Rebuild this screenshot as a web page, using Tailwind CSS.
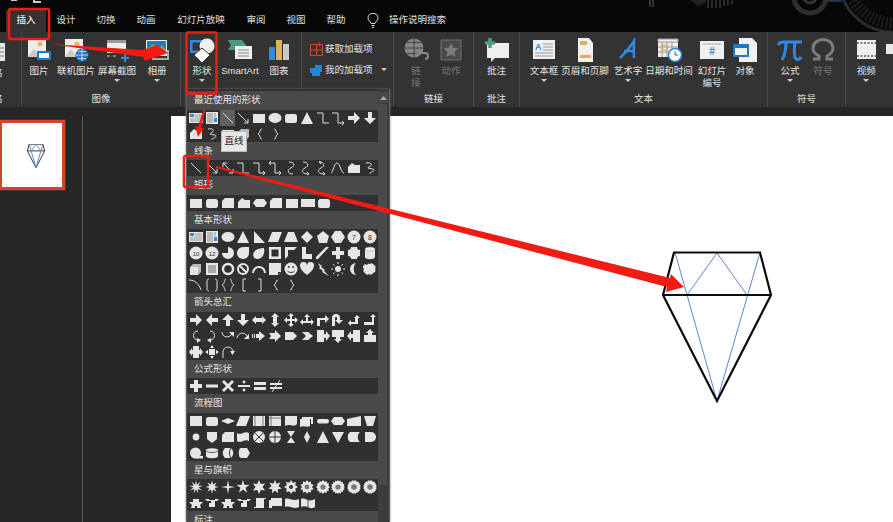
<!DOCTYPE html>
<html lang="zh-CN">
<head>
    <meta charset="UTF-8">
    <title>插入形状</title>
    <script src="https://cdn.jsdelivr.net/npm/@tailwindcss/browser@4"></script>
</head>
<body class="bg-[#262626]">
<div class="relative w-[893px] h-[522px] overflow-hidden flex flex-col bg-[#262626] text-[9.5px] text-[#e4e4e4] font-['Liberation_Sans','Noto_Sans_CJK_SC',sans-serif]">

    <!-- title bar + tabs -->
    <div class="relative h-[32px] shrink-0 bg-[#070707] flex items-end pl-[6px] text-[#e0e0e0]">
        <svg class="absolute left-0 top-0" width="893" height="32" fill="none">
            <path d="M11 0h6M34 0v2h7" stroke="#ccc" stroke-width="2"/>
            <path d="M650 0v7M653 0v7" stroke="#333" stroke-width="2"/>
            <path d="M690 0l8 6 8-3V0z" fill="#222"/>
            <path d="M708 0v8M712 0v8M716 0v8M720 0v8M724 0v6M728 0v5M732 0v4" stroke="#2b2b2b" stroke-width="2"/>
            <circle cx="810" cy="-3" r="16" stroke="#2e2e2e" stroke-width="5"/>
            <circle cx="810" cy="-3" r="6" stroke="#333" stroke-width="3"/>
            <circle cx="893" cy="-22" r="54" stroke="#2b2b2b" stroke-width="3"/>
            <circle cx="893" cy="-22" r="45" stroke="#1c1c1c" stroke-width="12" stroke-dasharray="2 2"/>
            <path d="M826 1h16" stroke="#1d3347" stroke-width="2"/>
        </svg>
        <div class="relative w-[40px] h-[22px] pb-[2px] bg-[#333] flex items-center justify-center text-white">插入</div>
        <div class="relative w-[40px] h-[22px] pb-[2px] flex items-center justify-center">设计</div>
        <div class="relative w-[40px] h-[22px] pb-[2px] flex items-center justify-center">切换</div>
        <div class="relative w-[40px] h-[22px] pb-[2px] flex items-center justify-center">动画</div>
        <div class="relative w-[70px] h-[22px] pb-[2px] flex items-center justify-center">幻灯片放映</div>
        <div class="relative w-[40px] h-[22px] pb-[2px] flex items-center justify-center">审阅</div>
        <div class="relative w-[40px] h-[22px] pb-[2px] flex items-center justify-center">视图</div>
        <div class="relative w-[40px] h-[22px] pb-[2px] flex items-center justify-center">帮助</div>
        <div class="relative w-[33px] h-[22px] pb-[2px] flex items-center justify-center">
            <svg width="12" height="15" viewBox="0 0 12 15" fill="none" stroke="#ddd"><path d="M4 10.5C3.5 8.5 1 7.500 1 4.800A5 4.500 0 0 1 11 4.800C11 7.500 8.500 8.500 8 10.500zM4.500 12.500h3M5 14.300h2"/></svg>
        </div>
        <div class="relative h-[22px] pb-[2px] flex items-center whitespace-nowrap">操作说明搜索</div>
    </div>

    <!-- ribbon -->
    <div class="h-[75px] shrink-0 bg-[#333] flex">
        <!-- cut off group on the left -->
        <div class="w-[22px] flex flex-col border-r border-[#484848] overflow-hidden">
            <div class="h-[58px] pt-[8px]">
                <svg width="6" height="24"><path d="M0 3h5v18H0z" fill="#e8e8e8"/><path d="M0 8h4M0 12h4M0 16h4" stroke="#777"/></svg>
                <div class="-ml-[7px] mt-[2px]">格</div>
            </div>
            <div class="-ml-[7px] leading-[17px]">格</div>
        </div>

        <!-- 图像 -->
        <div class="w-[159px] flex flex-col border-r border-[#484848]">
            <div class="h-[58px] pt-[5px] flex">
                <div class="w-[34px] flex flex-col items-center">
                    <svg width="26" height="26" viewBox="0 0 26 26"><path d="M2 2h18v18H2z" fill="#f0eeea"/><circle cx="14" cy="7" r="2.500" fill="#e5b562"/><path d="M2 20l6-8 6 8z" fill="#cfc9bf"/><path d="M11 14h14v9H11z" fill="#1f78c4"/><path d="M13 16h10v5H13z" fill="#f4f4f4"/></svg>
                    <div class="leading-[12px] mt-[2px] whitespace-nowrap">图片</div>
                </div>
                <div class="w-[40px] flex flex-col items-center">
                    <svg width="26" height="26" viewBox="0 0 26 26"><path d="M2 2h18v18H2z" fill="#f0eeea"/><circle cx="14" cy="7" r="2.500" fill="#e5b562"/><path d="M2 20l6-8 6 8z" fill="#cfc9bf"/><circle cx="19" cy="18" r="6.500" fill="#1f78c4"/><path d="M13 18h12M19 12v12M15 14.500h8M15 21.500h8" stroke="#eee" stroke-width=".8"/></svg>
                    <div class="leading-[12px] mt-[2px] whitespace-nowrap">联机图片</div>
                </div>
                <div class="w-[42px] flex flex-col items-center">
                    <svg width="26" height="26" viewBox="0 0 26 26"><path d="M3 3h19v13H3z" fill="#eee"/><path d="M3 3h19v3H3z" fill="#999"/><path d="M3 19h3M9 19h3" stroke="#999" stroke-width="1.500"/><path d="M17 21h8M21 17v8" stroke="#2f8ae0" stroke-width="2"/></svg>
                    <div class="leading-[12px] mt-[2px] whitespace-nowrap">屏幕截图</div>
                    <svg class="mt-[2px]" width="6" height="4"><path d="M0 0h6L3 3z" fill="#ccc"/></svg>
                </div>
                <div class="w-[38px] flex flex-col items-center">
                    <svg width="26" height="26" viewBox="0 0 26 26"><path d="M2 3h21v16H2z" fill="#efefef"/><path d="M3 4h19v8H3z" fill="#2979b8"/><path d="M3 12l6-5 5 4 4-3 4 4v3H3z" fill="#6aa36a"/><path d="M8 22h16v-9" fill="none" stroke="#aaa" stroke-width="2"/></svg>
                    <div class="leading-[12px] mt-[2px] whitespace-nowrap">相册</div>
                    <svg class="mt-[2px]" width="6" height="4"><path d="M0 0h6L3 3z" fill="#ccc"/></svg>
                </div>
            </div>
            <div class="text-center leading-[17px]">图像</div>
        </div>

        <!-- 插图 -->
        <div class="w-[121px] pl-[4px] flex border-r border-[#484848] h-[75px]">
            <div class="h-[58px] pt-[5px] flex">
                <div class="w-[34px] flex flex-col items-center">
                    <svg width="26" height="26" viewBox="0 0 26 26"><path d="M1 3h15v13H1z" fill="#2f8ae0"/><path d="M3.500 5.500h10v8h-10z" fill="#333"/><circle cx="18" cy="9" r="7.500" fill="#efefef"/><path d="M13 11l8 7-8 8-8-8z" fill="#fff" stroke="#333"/></svg>
                    <div class="leading-[12px] mt-[2px] whitespace-nowrap">形状</div>
                    <svg class="mt-[2px]" width="6" height="4"><path d="M0 0h6L3 3z" fill="#ccc"/></svg>
                </div>
                <div class="w-[42px] flex flex-col items-center">
                    <svg width="26" height="26" viewBox="0 0 26 26"><path d="M1 3h14l4 5-4 5H1l3-5z" fill="#4a9a86"/><path d="M8 9h17v13H8z" fill="#efefef"/><path d="M11 13h11M11 16h11M11 19h11" stroke="#888"/></svg>
                    <div class="leading-[12px] mt-[2px] whitespace-nowrap">SmartArt</div>
                </div>
                <div class="w-[36px] flex flex-col items-center">
                    <svg width="26" height="26" viewBox="0 0 26 26"><path d="M3 10h6v13H3z" fill="#2f8ae0"/><path d="M10 3h6v20h-6z" fill="#d8b35a"/><path d="M17 7h6v16h-6z" fill="#c8c8c8"/></svg>
                    <div class="leading-[12px] mt-[2px] whitespace-nowrap">图表</div>
                </div>
            </div>
        </div>

        <!-- 加载项 -->
        <div class="w-[92px] pl-[8px] pt-[10px] flex flex-col gap-[7px] border-r border-[#484848] h-[75px]">
            <div class="flex items-center gap-[1px] whitespace-nowrap">
                <svg width="14" height="14" viewBox="0 0 14 14" fill="none" stroke="#d04a33"><path d="M.5 2.500h12v11H.5zM.5 8h12M6.500 2.500v11M9 0v5M7 2.500h5"/></svg>
                <span>获取加载项</span>
            </div>
            <div class="flex items-center gap-[2px] whitespace-nowrap">
                <svg width="13" height="13" viewBox="0 0 13 13" fill="#1f86e0"><path d="M5 1h7v7h-2v4H2V9H0V4h5z"/></svg>
                <span>我的加载项</span>
                <svg class="ml-[6px]" width="6" height="4"><path d="M0 0h6L3 3z" fill="#ccc"/></svg>
            </div>
        </div>

        <!-- 链接 -->
        <div class="w-[80px] flex flex-col border-r border-[#484848]">
            <div class="h-[58px] pt-[5px] pl-[5px] flex text-[#777]">
                <div class="w-[34px] flex flex-col items-center">
                    <svg width="26" height="26" viewBox="0 0 26 26"><circle cx="11" cy="11" r="9.500" fill="#858585"/><path d="M1.500 11h19M11 1.500v19M3.500 5.500h15M3.500 16.500h15" stroke="#333" stroke-width=".8"/><path d="M14 20a3 3 0 0 1 3-4h5a3 3 0 0 1 0 6" fill="none" stroke="#888" stroke-width="2"/></svg>
                    <div class="leading-[12px] mt-[2px] w-[10px] text-center">链接</div>
                </div>
                <div class="w-[36px] flex flex-col items-center">
                    <svg width="26" height="26" viewBox="0 0 26 26"><path d="M3 3h20v20H3z" fill="#4a4a4a" stroke="#707070"/><path d="M13 6l2.200 4.800 5.200.6-3.900 3.500 1.100 5.100-4.600-2.600-4.600 2.600 1.100-5.100-3.900-3.500 5.200-.6z" fill="#7c7c7c"/></svg>
                    <div class="leading-[12px] mt-[2px] whitespace-nowrap">动作</div>
                </div>
            </div>
            <div class="text-center leading-[17px]">链接</div>
        </div>

        <!-- 批注 -->
        <div class="w-[46px] flex flex-col border-r border-[#484848]">
            <div class="h-[58px] pt-[5px] flex flex-col items-center">
                <svg width="26" height="26" viewBox="0 0 26 26"><path d="M3 6h22v15H11l-4 4v-4H3z" fill="#efefef"/><path d="M6 1v10M1 6h10" stroke="#4f9c80" stroke-width="3.500"/></svg>
                <div class="leading-[12px] mt-[2px]">批注</div>
            </div>
            <div class="text-center leading-[17px]">批注</div>
        </div>

        <!-- 文本 -->
        <div class="w-[248px] flex flex-col border-r border-[#484848]">
            <div class="h-[58px] pt-[5px] pl-[4px] flex">
                <div class="w-[40px] flex flex-col items-center">
                    <svg width="26" height="26" viewBox="0 0 26 26"><path d="M2 3h22v19H2z" fill="#f0f0f0"/><text x="4" y="13" font-size="9" font-weight="700" fill="#2f8ae0">A</text><path d="M12 7h10M12 10h10M12 13h10M4 16h18M4 19h18" stroke="#999"/></svg>
                    <div class="leading-[12px] mt-[2px] whitespace-nowrap">文本框</div>
                    <svg class="mt-[2px]" width="6" height="4"><path d="M0 0h6L3 3z" fill="#ccc"/></svg>
                </div>
                <div class="w-[42px] flex flex-col items-center">
                    <svg width="26" height="26" viewBox="0 0 26 26"><path d="M6 1h11l4 5v19H6z" fill="#f0f0f0"/><path d="M8 4h7v4H8zM8 18h11v3H8z" fill="#e0ae55"/></svg>
                    <div class="leading-[12px] mt-[2px] whitespace-nowrap">页眉和页脚</div>
                </div>
                <div class="w-[44px] flex flex-col items-center">
                    <svg width="26" height="26" viewBox="0 0 26 26" fill="none" stroke="#2f8ae0" stroke-width="2.500"><path d="M5 21C11 15 16 9 19 4c0 6-.5 11 0 17M9 14h11"/></svg>
                    <div class="leading-[12px] mt-[2px] whitespace-nowrap">艺术字</div>
                    <svg class="mt-[2px]" width="6" height="4"><path d="M0 0h6L3 3z" fill="#ccc"/></svg>
                </div>
                <div class="w-[38px] flex flex-col items-center">
                    <svg width="26" height="26" viewBox="0 0 26 26"><path d="M2 2h20v18H2z" fill="#efefef"/><path d="M2 2h20v3H2zM6 5v15M11 5v15M16 5v15M2 10h20M2 15h20" stroke="#999" fill="none"/><path d="M6 8h5v5H6z" fill="none" stroke="#e09a4a"/><circle cx="19" cy="18" r="6.500" fill="#fff" stroke="#2f8ae0" stroke-width="1.500"/><path d="M19 14.500V18h3" stroke="#555" fill="none"/></svg>
                    <div class="leading-[12px] mt-[2px] whitespace-nowrap">日期和时间</div>
                </div>
                <div class="w-[48px] flex flex-col items-center">
                    <svg width="26" height="26" viewBox="0 0 26 26"><path d="M1 4h24v18H1z" fill="#efefef"/><path d="M4 7h18" stroke="#aaa"/><text x="13" y="18" text-anchor="middle" font-size="10" font-weight="700" fill="#2f8ae0">#</text></svg>
                    <div class="leading-[12px] mt-[2px] whitespace-nowrap text-center">幻灯片<br>编号</div>
                </div>
                <div class="w-[18px] flex flex-col items-center">
                    <svg class="shrink-0" width="26" height="26" viewBox="0 0 26 26"><path d="M7 1h13l5 5v19H7z" fill="#f0f0f0"/><path d="M2 8h14v11H2z" fill="#f0f0f0" stroke="#1f78c4" stroke-width="2"/><path d="M2 8h14v3H2z" fill="#1f78c4"/></svg>
                    <div class="leading-[12px] mt-[2px] whitespace-nowrap">对象</div>
                </div>
            </div>
            <div class="text-center leading-[17px]">文本</div>
        </div>

        <!-- 符号 -->
        <div class="w-[78px] flex flex-col border-r border-[#484848]">
            <div class="h-[58px] pt-[5px] pl-[5px] flex">
                <div class="w-[34px] flex flex-col items-center">
                    <svg width="26" height="26" viewBox="0 0 26 26" fill="none" stroke="#2f8ae0" stroke-width="3"><path d="M1 8c2-3 3-3 6-3h18M9 5c0 8-1 13-4 18M18 5c-1 8-1 15 1 17 2 1 4 0 5-2"/></svg>
                    <div class="leading-[12px] mt-[2px]">公式</div>
                    <svg class="mt-[2px]" width="6" height="4"><path d="M0 0h6L3 3z" fill="#ccc"/></svg>
                </div>
                <div class="w-[32px] flex flex-col items-center text-[#777]">
                    <svg width="26" height="26" viewBox="0 0 26 26" fill="none" stroke="#7c7c7c" stroke-width="3"><path d="M3 22h6v-3C5 17 3 14 3 11a10 8.500 0 0 1 20 0c0 3-2 6-6 8v3h6"/></svg>
                    <div class="leading-[12px] mt-[2px]">符号</div>
                </div>
            </div>
            <div class="text-center leading-[17px]">符号</div>
        </div>

        <!-- 媒体 -->
        <div class="flex-1 flex flex-col overflow-hidden">
            <div class="h-[58px] pt-[5px] pl-[6px] flex">
                <div class="w-[34px] flex flex-col items-center">
                    <svg width="26" height="26" viewBox="0 0 26 26"><path d="M4 3h19v19H4z" fill="#efefef"/><path d="M4 6h19M4 19h19" stroke="#555" stroke-width="1.500" stroke-dasharray="2 1.500"/></svg>
                    <div class="leading-[12px] mt-[2px]">视频</div>
                    <svg class="mt-[2px]" width="6" height="4"><path d="M0 0h6L3 3z" fill="#ccc"/></svg>
                </div>
                <svg class="ml-[6px] mt-[7px]" width="8" height="10"><path d="M0 0h8v10H0z" fill="#e8e8e8"/></svg>
            </div>
        </div>
    </div>

    <div class="h-[9px] shrink-0 bg-[#262626]"></div>

    <!-- thumbnails + slide -->
    <div class="flex-1 flex min-h-0">
        <div class="w-[83px] shrink-0 border-r border-[#5a5a5a] pt-[4px]">
            <div class="w-[66px] h-[70px] -ml-[1px] border-[3px] border-[#d24726] bg-white pl-[25px] pt-[21px] shadow-[0_0_0_1px_#3a3a3a]">
                <svg width="18" height="24" viewBox="0 0 108 150" fill="none">
                    <path d="M11 1H97L108 43 54 149 0 43zM0 43H108" stroke="#333" stroke-width="6"/>
                    <path d="M12 1 54 148 97 1M25 43 54 1 84 43" stroke="#5f87cf" stroke-width="6"/>
                </svg>
            </div>
        </div>
        <div class="w-[88px] shrink-0"></div>
        <div class="relative flex-1 bg-white">
            <!-- diamond drawn on the slide -->
            <svg class="absolute left-[491px] top-[135px]" width="110" height="152" viewBox="0 0 110 152" fill="none">
                <path d="M13 1.500 55 150 98 1.500M25 44 55 2 85 44" stroke="#5f87cf" stroke-width="1"/>
                <path d="M12 1.500H98L109 44 55 150 1 44zM1 44H109" stroke="#0c0c0c" stroke-width="2.200" stroke-linejoin="miter"/>
            </svg>
        </div>
    </div>

    <!-- 形状 dropdown -->
    <div class="absolute left-[186px] top-[89px] bottom-0 w-[204px] bg-[#303030] border-l border-r border-[#5c5c5c] flex shadow-[0_0_2px_#777]">
        <div id="gallery" class="w-[191px] shrink-0 mt-[2px]"></div>
        <div class="flex-1 bg-[#3c3c3c] relative">
            <div class="h-[11px] mt-[3px] bg-[#474747] flex items-center justify-center">
                <svg width="7" height="4"><path d="M0 4L3.500 0 7 4z" fill="#aaa"/></svg>
            </div>
            <div class="absolute left-0 right-[2px] top-[15px] h-[381px] bg-[#4a4a4a]"></div>
        </div>
    </div>

    <!-- tooltip -->
    <div class="absolute left-[221px] top-[131px] w-[26px] h-[21px] bg-[#e8e8e8] border border-[#bdbdbd] text-[#222] flex items-center justify-center">直线</div>

    <!-- red annotations -->
    <svg class="absolute inset-0" width="893" height="522" fill="none">
        <rect x="9" y="9" width="40" height="30" rx="1.500" stroke="#f01c14" stroke-width="2.500"/>
        <rect x="186.500" y="32.500" width="30" height="61" rx="1.500" stroke="#f01c14" stroke-width="2.500"/>
        <rect x="184" y="156" width="24" height="31" rx="1.500" stroke="#f01c14" stroke-width="2.500"/>
        <path d="M50 44 143 50 157 45 168 53 145 61 143 57z" fill="#f01c14"/>
        <path d="M203 110 205 110 201 128 204 128 198 137 195 126 198 127z" fill="#f01c14"/>
        <path d="M216 166 670 278 671 274 684 287 666 292 667 287 216 168z" fill="#f01c14"/>
    </svg>
</div>

<script>
    // little polygon stars for the 星与旗帜 rows
    function star(n, r1, r2) {
        let pts = [];
        for (let i = 0; i < n * 2; i++) {
            const r = i % 2 ? r2 : r1;
            const a = Math.PI * i / n - Math.PI / 2;
            pts.push((7 + r * Math.cos(a)).toFixed(1) + ',' + (7 + r * Math.sin(a)).toFixed(1));
        }
        return `<polygon points="${pts.join(' ')}" fill="#e6e6e6"/>`;
    }
    const f = d => `<path d="${d}" fill="#e6e6e6"/>`;
    const l = d => `<path d="${d}" fill="none" stroke="#dcdcdc" stroke-width="1"/>`;
    const hole = d => `<path d="${d}" fill="#333"/>`;

    const S = {
        tb: f('M0 2h14v10H0z') + `<path d="M1 3h4v3H1z" fill="#2f8ae0"/>` + `<path d="M6 4h7M6 6h7M1 8h12M1 10h12" stroke="#888" stroke-width=".8"/>`,
        vtb: f('M1 1h12v12H1z') + `<path d="M3 2v10M5 2v10M7 2v10M10 2v4" stroke="#777" stroke-width=".8"/><path d="M9 7h3v4H9z" fill="#2f8ae0"/>`,
        line: l('M2 2 12 12'),
        arrowline: l('M2 2 12 12M12 8v4H8'),
        dbl: l('M2 2 12 12M12 8v4H8M2 6V2h4'),
        rect: f('M1 3h12v9H1z'),
        sq: f('M1 2h12v10H1z'),
        wide: f('M0 3h14v8H0z'),
        round: `<rect x="1" y="3" width="12" height="9" rx="2.500" fill="#e6e6e6"/>`,
        ellipse: `<ellipse cx="7" cy="7" rx="6.500" ry="5" fill="#e6e6e6"/>`,
        tri: f('M7 1 13 13H1z'),
        rtri: f('M2 1 13 13H2z'),
        elbow: l('M1 2h6v10h6'),
        elbowA: l('M1 2h6v10h6M11 10l2 2-2 2'),
        elbowD: l('M1 2h6v10h6M11 10l2 2-2 2M3 0 1 2l2 2'),
        curve: l('M5 1c6 0 6 4 2 6s-4 6 2 6'),
        curveA: l('M3 1c6 0 6 4 2 6s-4 6 4 6M7 11l2 2-2 1'),
        curveD: l('M3 1c6 0 6 4 2 6s-4 6 4 6M7 11l2 2-2 1M5 0 3 1l2 2'),
        wave: l('M0 12C2 12 3 2 6 2s4 10 7 10'),
        free: f('M1 12V6l4-4 3 2h5v8z'),
        scrib: l('M3 2c6-1 7 2 3 4s5 1 5 3-5 2-4 4'),
        right: f('M1 5h6V1l6 6-6 6V9H1z'),
        left: f('M13 5H7V1L1 7l6 6V9h6z'),
        up: f('M5 13V7H1l6-6 6 6H9v6z'),
        down: f('M5 1v6H1l6 6 6-6H9V1z'),
        lr: f('M0 7l4-4v2h6V3l4 4-4 4V9H4v2z'),
        ud: f('M7 0l4 4H9v6h2l-4 4-4-4h2V4H3z'),
        quad: f('M7 0l3 3H8v3h3V4l3 3-3 3V8H8v3h2l-3 3-3-3h2V8H3v2L0 7l3-3v2h3V3H4z'),
        lru: f('M7 1l3 3H8v4h3V6l3 3-3 3v-2H3v2L0 9l3-3v2h3V4H4z'),
        bent: f('M1 13V5h8V2l4 4-4 4V7H4v6z'),
        uturn: f('M1 13V5a4 4 0 0 1 8 0v2h3l-4 4-4-4h2V5a1 1 0 0 0-2 0v8z'),
        lup: f('M10 2l3 3h-2v6H4v2l-3-3 3-3v2h4V5H7z'),
        bup: f('M1 9h8V4H7l3-3 3 3h-2v8H1z'),
        cr: l('M9 2C3 2 3 11 9 11') + f('M8 9l4 2-4 3z'),
        cl: l('M5 2c6 0 6 9 0 9') + f('M6 9l-4 2 4 3z'),
        cu: l('M1 3c0 6 8 6 10 2') + f('M8 3h5v5z'),
        cd: l('M1 9c1-6 8-6 10-2') + f('M8 10h5V5z'),
        striped: f('M0 5h1v4H0zM2 5h1v4H2zM4 5h3V2l6 5-6 5V9H4z'),
        notched: f('M1 4h6V1l6 6-6 6v-3H1l2-3z'),
        home: f('M1 3h8l4 4-4 4H1z'),
        chev: f('M2 3h6l5 4-5 4H2l4-4z'),
        rc: f('M1 1h7v12H1zM8 5h2V2l4 5-4 5V9H8z'),
        dc: f('M1 1h12v7H9v2h2l-4 4-4-4h2V8H1z'),
        lc: f('M6 1h7v12H6zM6 5H4V2L0 7l4 5V9h2z'),
        uc: f('M1 6h12v7H1zM5 6V4H3l4-4 4 4H9v2z'),
        lrc: f('M4 1h6v12H4zM4 5H3V3L0 7l3 4V9h1zM10 5h1V3l3 4-3 4V9h-1z'),
        qc: f('M4 4h6v6H4zM7 0l2 3H5zM7 14l2-3H5zM0 7l3-2v4zM14 7l-3-2v4z'),
        circ: l('M2 13V7a5 5 0 0 1 10 0') + f('M9 6h5l-2.500 4z'),
        diamond: f('M7 1l6 6-6 6-6-6z'),
        flat: f('M7 4l7 3-7 3-7-3z'),
        para: f('M4 2h10l-4 10H0z'),
        trap: f('M4 2h6l4 10H0z'),
        pent: f('M7 1l6 5-2 7H3L1 6z'),
        hex: f('M4 1h6l4 6-4 6H4L0 7z'),
        n7: `<circle cx="7" cy="7" r="6.500" fill="#e6e6e6"/><text x="7" y="10" text-anchor="middle" font-size="7" fill="#333">7</text>`,
        n8: `<circle cx="7" cy="7" r="6.500" fill="#e6e6e6"/><text x="7" y="10" text-anchor="middle" font-size="7" fill="#333">8</text>`,
        n10: `<circle cx="7" cy="7" r="6.500" fill="#e6e6e6"/><text x="7" y="9.500" text-anchor="middle" font-size="6" fill="#333">10</text>`,
        n12: `<circle cx="7" cy="7" r="6.500" fill="#e6e6e6"/><text x="7" y="9.500" text-anchor="middle" font-size="6" fill="#333">12</text>`,
        pie: f('M7 1a6 6 0 1 1-6 6h6z'),
        tear: f('M13 1v6a6 6 0 1 1-6-6z'),
        chord: f('M12 2c1 6-1 11-7 11C2 13 0 9 2 6c2-3 6-4 10-4z'),
        frame: f('M1 1h12v12H1zM3.500 3.500v7h7v-7z').replace('/>', ' fill-rule="evenodd"/>'),
        half: f('M1 1h12l-3 3H4v6l-3 3z'),
        lsh: f('M2 1h4v7h6v5H2z'),
        stripe: f('M10 1h3L2 13H0v-2z'),
        cross: f('M5 1h4v4h4v4H9v4H5V9H1V5h4z'),
        plaque: f('M4 1h6c0 2 1 3 3 3v6c-2 0-3 1-3 3H4c0-2-1-3-3-3V4c2 0 3-1 3-3z'),
        can: `<path d="M2 3v8c0 3 10 3 10 0V3z" fill="#e6e6e6"/><ellipse cx="7" cy="3" rx="5" ry="2" fill="#f6f6f6" stroke="#888" stroke-width=".5"/>`,
        cube: f('M1 5h8v8H1z') + `<path d="M1 5l3-3h8L9 5zM9 5l3-3v8l-3 3z" fill="#bbb"/>`,
        bevel: f('M1 1h12v12H1z') + `<path d="M3 3h8v8H3z" fill="#aaa"/>`,
        donut: `<circle cx="7" cy="7" r="5" fill="none" stroke="#e6e6e6" stroke-width="2.400"/>`,
        no: `<circle cx="7" cy="7" r="5" fill="none" stroke="#e6e6e6" stroke-width="2"/><path d="M3.500 3.500l7 7" stroke="#e6e6e6" stroke-width="2"/>`,
        arch: `<path d="M1 11a6 6 0 0 1 12 0" fill="none" stroke="#e6e6e6" stroke-width="2"/>`,
        fold: f('M1 1h12v9l-3 3H1z') + hole('M10 13v-3h3z'),
        smile: `<circle cx="7" cy="7" r="6.500" fill="#e6e6e6"/><circle cx="4.800" cy="5" r=".9" fill="#333"/><circle cx="9.200" cy="5" r=".9" fill="#333"/><path d="M3.500 9c2 2 5 2 7 0" stroke="#333" fill="none"/>`,
        heart: f('M7 13C3 10 0 7 0 4a3.500 3.500 0 0 1 7-1 3.500 3.500 0 0 1 7 1c0 3-3 6-7 9z'),
        bolt: f('M2 1l4 3-1 1 4 3-1 1 5 5-7-4 1-1-4-3 1-1z'),
        sun: `<circle cx="7" cy="7" r="3" fill="#e6e6e6"/><path d="M7 0v2M7 12v2M0 7h2M12 7h2M2 2l1.500 1.500M10.500 10.500 12 12M2 12l1.500-1.500M10.500 3.500 12 2" stroke="#e6e6e6"/>`,
        moon: f('M9 1a6 6 0 1 0 0 12C6 11 6 3 9 1z'),
        cloud: f('M4 3a2 2 0 0 1 3-1 2.500 2.500 0 0 1 4 1 2.500 2.500 0 0 1 1 4 2.500 2.500 0 0 1-2 4 2.500 2.500 0 0 1-4 1 2.500 2.500 0 0 1-4-1 2.500 2.500 0 0 1-1-4 2.500 2.500 0 0 1 3-4z'),
        arc: l('M0 2c6 0 10 4 12 10'),
        dbr: l('M4 1C2 1 2 2 2 4v6c0 2 0 3 2 3M10 1c2 0 2 1 2 3v6c0 2 0 3-2 3'),
        dbc: l('M5 1C3 1 4 6 1 7c3 1 2 6 4 6M9 1c2 0 1 5 4 6-3 1-2 6-4 6'),
        lbr: l('M9 1H6v12h3'),
        rbr: l('M5 1h3v12H5'),
        lbc: l('M9 2C6 2 8 6 5 7c3 1 1 5 4 5'),
        rbc: l('M5 2c3 0 1 4 4 5-3 1-1 5-4 5'),
        plus: f('M5 1h4v4h4v4H9v4H5V9H1V5h4z'),
        minus: f('M1 5.500h12v3H1z'),
        times: f('M3 1l4 4 4-4 2 2-4 4 4 4-2 2-4-4-4 4-2-2 4-4-4-4z'),
        div: f('M1 6h12v2H1z') + `<circle cx="7" cy="3" r="1.400" fill="#e6e6e6"/><circle cx="7" cy="11" r="1.400" fill="#e6e6e6"/>`,
        eq: f('M1 3h12v3H1zM1 8h12v3H1z'),
        ne: f('M1 4h12v2H1zM1 8h12v2H1z') + l('M3 13 11 1'),
        pre: f('M1 2h12v10H1z') + `<path d="M3 2v10M11 2v10" stroke="#777"/>`,
        intern: f('M1 2h12v10H1z') + `<path d="M1 4h12M3 2v10" stroke="#777"/>`,
        doc: f('M1 2h12v8c-3 4-8-1-12 2z'),
        multi: f('M0 5h10v7c-3 2-6-1-10 1zM2 3h11v7h-2V5H2z'),
        term: `<rect x="1" y="5" width="12" height="4.500" rx="2.200" fill="#e6e6e6"/>`,
        prep: f('M3 3h8l3 4-3 4H3L0 7z'),
        manual: f('M0 5l14-3v10H0z'),
        mop: f('M1 2h12l-3 10H4z'),
        dot: `<circle cx="7" cy="7" r="3.400" fill="#e6e6e6"/>`,
        off: f('M2 2h10v7l-5 4-5-4z'),
        card: f('M4 2h9v10H1V5z'),
        tape: f('M1 3c4 3 8-3 12 0v8c-4-3-8 3-12 0z'),
        sum: `<circle cx="7" cy="7" r="6" fill="#e6e6e6"/><path d="M3 3l8 8M11 3l-8 8" stroke="#333"/>`,
        or: `<circle cx="7" cy="7" r="6" fill="#e6e6e6"/><path d="M7 1v12M1 7h12" stroke="#333"/>`,
        coll: f('M3 1h8L7 7l4 6H3l4-6z'),
        sort: f('M7 1l3 6-3 6-3-6z'),
        merge: f('M1 2h12L7 13z'),
        store: f('M3 2h10c-3 2-3 8 0 10H3C0 10 0 4 3 2z'),
        delay: f('M2 2h6a5 5 0 0 1 0 10H2z'),
        seq: `<circle cx="6.500" cy="7" r="5.500" fill="#e6e6e6"/>` + f('M7 10h7v2.500H7z'),
        mag: `<path d="M1 4v6c0 3 12 3 12 0V4z" fill="#e6e6e6"/><path d="M1 4c0 3 12 3 12 0" stroke="#333" fill="none"/><ellipse cx="7" cy="4" rx="6" ry="1.800" fill="#e6e6e6"/>`,
        direct: f('M4 2h6c3 3 3 7 0 10H4C1 9 1 5 4 2z') + `<path d="M10 2c-2 3-2 7 0 10" stroke="#333" fill="none"/>`,
        disp: f('M4 2h6l3 5-3 5H4C1 12 1 2 4 2z'),
        exp1: star(9, 7, 2.500),
        exp2: star(8, 6.500, 2.800),
        s4: star(4, 7, 1.600),
        s5: star(5, 7, 2.600),
        s6: star(6, 7, 3.500),
        s7: star(7, 7, 3.600),
        s8: star(8, 7, 4.500) + `<circle cx="7" cy="7" r="2" fill="#333"/>`,
        s10: star(10, 7, 5) + `<circle cx="7" cy="7" r="2.400" fill="#777"/>`,
        s12: star(12, 7, 5.500) + `<circle cx="7" cy="7" r="2.600" fill="#777"/>`,
        s16: star(16, 7, 5.800) + `<circle cx="7" cy="7" r="2.600" fill="#777"/>`,
        s24: star(24, 7, 6) + `<circle cx="7" cy="7" r="2.800" fill="#777"/>`,
        rib1: f('M4 3h6v7H4zM0 6h4v4h2v2H2l1-3zM14 6h-4v4H8v2h4l-1-3z'),
        rib2: f('M4 4h6v7H4zM0 3h4v4h2V5H2l1 1zM14 3h-4v4H8V5h4l-1 1z'),
        scroll: f('M3 2h10v1h-2v9H1v-1h2z'),
        hscroll: f('M0 4h2V2h11v8H3v2H0z'),
        wavef: f('M0 3c4-2 8 3 14 0v8c-5 3-9-2-14 0z'),
        dwave: f('M0 3c2-1 4 0 7 1 3 1 5 0 7-1v8c-2 1-4 2-7 0-3-1-5-1-7 0z') + `<path d="M7 4v8" stroke="#555"/>`
    };

    const sections = [
        ['最近使用的形状', [
            ['tb','vtb','line','arrowline','rect','ellipse','round','tri','elbow','elbowA','right','down'],
            ['free','scrib','rect','cube','lbc','rbc']
        ]],
        ['线条', [['line','arrowline','dbl','elbow','elbowA','elbowD','curve','curveA','curveD','wave','free','scrib']]],
        ['矩形', [['rect','round','card','free','prep','card','rect','wide','round']]],
        ['基本形状', [
            ['tb','vtb','ellipse','tri','rtri','para','trap','diamond','pent','hex','n7','n8'],
            ['n10','n12','pie','tear','chord','frame','half','lsh','stripe','cross','plaque','can'],
            ['cube','bevel','donut','no','arch','fold','smile','heart','bolt','sun','moon','cloud'],
            ['arc','dbr','dbc','lbr','rbr','lbc','rbc']
        ]],
        ['箭头总汇', [
            ['right','left','up','down','lr','ud','quad','lru','bent','uturn','lup','bup'],
            ['cr','cl','cu','cd','striped','notched','home','chev','rc','dc','lc','uc'],
            ['lrc','qc','circ']
        ]],
        ['公式形状', [['plus','minus','times','div','eq','ne']]],
        ['流程图', [
            ['sq','round','flat','para','pre','intern','doc','multi','term','prep','manual','mop'],
            ['dot','off','card','tape','sum','or','coll','sort','tri','merge','store','delay'],
            ['seq','mag','direct','disp']
        ]],
        ['星与旗帜', [
            ['exp1','exp2','s4','s5','s6','s7','s8','s10','s12','s16','s24','s24'],
            ['rib1','rib2','rib1','rib2','scroll','hscroll','wavef','dwave']
        ]],
        ['标注', []]
    ];

    const gallery = document.getElementById('gallery');
    sections.forEach(([title, rows]) => {
        const head = document.createElement('div');
        head.className = 'h-[18.5px] bg-[#4a4a4a] pl-[7px] flex items-center text-[#e6e6e6]';
        head.textContent = title;
        gallery.appendChild(head);
        rows.forEach((row) => {
            const r = document.createElement('div');
            r.className = 'h-[16px] flex pl-[1px]';
            r.innerHTML = row.map((name, i) => {
                // the first 直线 in the recent row is hovered
                const hovered = title === '最近使用的形状' && i === 2 && name === 'line';
                const bg = hovered ? 'bg-[#5f5f5f]' : '';
                return `<div class="w-[16px] h-[16px] flex items-center justify-center ${bg}"><svg width="14" height="14" viewBox="0 0 14 14">${S[name]}</svg></div>`;
            }).join('');
            gallery.appendChild(r);
        });
    });
</script>
</body>
</html>
